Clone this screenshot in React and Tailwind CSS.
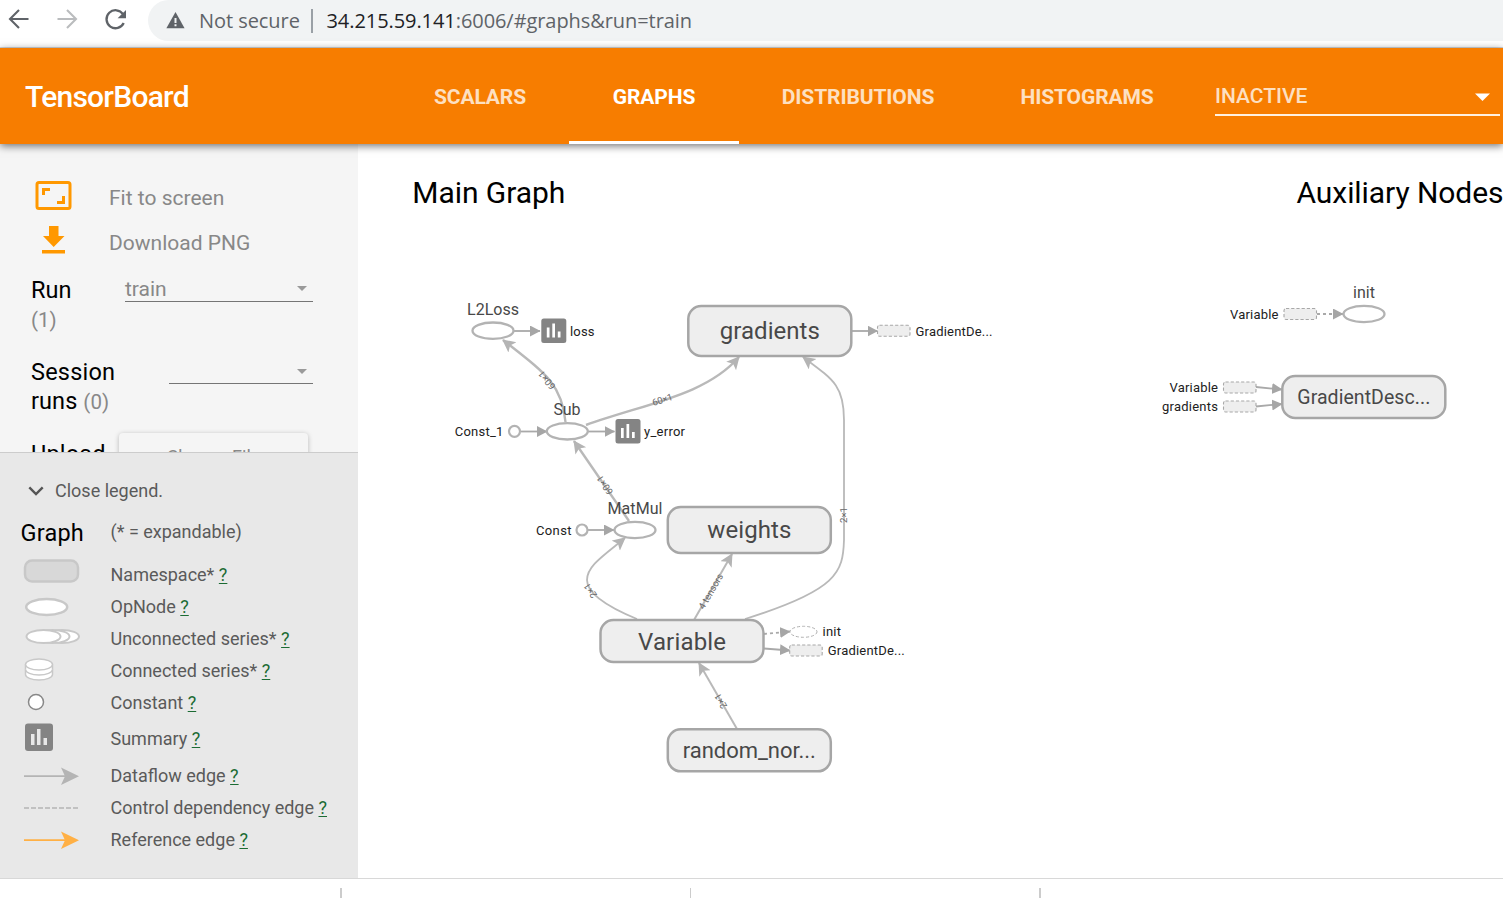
import React from "react";

const TABS = [
  { label: "SCALARS", box: "w-[178px]" },
  { label: "GRAPHS", active: true, box: "w-[170px]" },
  { label: "DISTRIBUTIONS", box: "w-[238px]" },
  { label: "HISTOGRAMS", box: "w-[220px]" },
];

function BrowserBar() {
  return (
    <div className="flex h-[48px] shrink-0 items-start border-b border-[#d5d8dc] bg-white">
      <svg className="h-[40px] w-[148px] shrink-0" viewBox="0 0 148 40" fill="none">
        <path d="M28.500 19H11M19 10L10 19l9 9" stroke="#5f6368" strokeWidth="2.100" />
        <path d="M57.500 19H75M67 10l9 9l-9 9" stroke="#babcbe" strokeWidth="2.100" />
        <path d="M123 14.200A9 9 0 1 0 123.700 23" stroke="#5f6368" strokeWidth="2.300" />
        <path d="M126 10v8.200h-8.400z" fill="#5f6368" />
      </svg>
      <div className="flex h-[41px] min-w-0 flex-1 items-center rounded-l-full bg-[#f1f3f4] pl-[18px] font-['Open_Sans','Noto_Sans',sans-serif] text-[20px] leading-[40px]">
        <svg className="-mt-[2px] h-[18px] w-[19px] shrink-0" viewBox="0 0 19 18">
          <path d="M9.500 1L18.600 17.200H.4z" fill="#5f6368" />
          <path d="M8.500 7h2v5h-2zM8.500 13.300h2v2h-2z" fill="#f1f3f4" />
        </svg>
        <span className="ml-[14px] w-[99px] whitespace-nowrap tracking-[-0.06px] text-[#5f6368]">Not secure</span>
        <span className="ml-[13px] h-[24px] w-[2px] bg-[#9aa0a6]" />
        <span className="ml-[13.5px] whitespace-nowrap tracking-[-0.07px] text-[#5f6368]">
          <span className="text-[#202124]">34.215.59.141</span>:6006/#graphs&amp;run=train
        </span>
      </div>
    </div>
  );
}

function Header() {
  return (
    <header className="relative z-10 flex h-[96px] shrink-0 bg-[#f77d00] shadow-[0_2px_8px_rgba(0,0,0,0.55)]">
      <div className="flex w-[391px] shrink-0 items-center pl-[25px] text-[30px] font-medium tracking-[-0.75px] text-white">
        TensorBoard
      </div>
      <nav className="flex shrink-0 text-[21px] font-bold tracking-[-0.12px]">
        {TABS.map((t) => (
          <div
            key={t.label}
            className={`flex items-center justify-center border-b-[3px] pt-[7px] ${t.box} ${
              t.active ? "border-white text-white" : "border-transparent text-[#fde0c2]"
            }`}
          >
            {t.label}
          </div>
        ))}
      </nav>
      <div className="ml-[18px] mt-[32px] flex h-[36px] w-[285px] items-center justify-between border-b-2 border-[#fff0e0] pr-[10px] text-[21px] font-medium text-[#fde0c2]">
        <span>INACTIVE</span>
        <svg className="h-[8px] w-[15px]" viewBox="0 0 15 8">
          <path d="M0 .5h15L7.500 8z" fill="#fff" />
        </svg>
      </div>
    </header>
  );
}

function Caret() {
  return (
    <svg className="h-[5px] w-[10px]" viewBox="0 0 10 5">
      <path d="M0 0h10L5 5z" fill="#9a9a9a" />
    </svg>
  );
}

function Controls() {
  return (
    <div className="h-[308px] shrink-0 overflow-hidden bg-[#f5f5f5] text-[21px] text-[#888]">
      <div className="mt-[31px] flex h-[45px] items-center pl-[35px]">
        <svg className="-mt-[4px] h-[31px] w-[37px]" viewBox="0 0 37 31" fill="none" stroke="#ff9800">
          <rect x="2" y="2.500" width="33" height="26" rx="2" strokeWidth="3" />
          <path d="M8.500 15V9.500H15M22 22.500h6.500V16" strokeWidth="3" />
        </svg>
        <span className="ml-[37px] pt-[2px]">Fit to screen</span>
      </div>
      <div className="flex h-[45px] items-center pl-[35px]">
        <svg className="-mt-[6px] h-[31px] w-[37px]" viewBox="0 0 37 31" fill="#ff9800">
          <path d="M14 2h9.500v10h6L18.700 23L8 12h6zM7 26h23v3.500H7z" />
        </svg>
        <span className="ml-[37px] pt-[2px]">Download PNG</span>
      </div>
      <div className="flex h-[82px] items-start pl-[31px] pt-[10px]">
        <div className="w-[94px] leading-[31px]">
          <div className="h-[32px] text-[23.5px] text-black">Run</div>
          <div className="h-[30px] text-[20.5px] leading-[27px]">(1)</div>
        </div>
        <div className="mt-[1px] flex h-[26px] w-[188px] items-center justify-between border-b border-[#757575] pr-[6px]">
          <span className="pt-[2px]">train</span>
          <Caret />
        </div>
      </div>
      <div className="flex h-[77px] items-start pl-[31px] pt-[11px]">
        <div className="w-[138px] text-[23.5px] leading-[29px] text-black">
          <div className="tracking-[0.2px]">Session</div>
          <div className="tracking-[0.1px]">
            runs <span className="text-[20.5px] text-[#888]">(0)</span>
          </div>
        </div>
        <div className="mt-[1px] flex h-[25px] w-[144px] items-center justify-end border-b border-[#757575] pr-[6px]">
          <Caret />
        </div>
      </div>
      <div className="flex items-start pl-[31px]">
        <div className="w-[88px] pt-[16px] text-[23.5px] leading-[29px] tracking-[0.2px] text-black">Upload</div>
        <div className="mt-[9px] h-[48px] w-[189px] rounded-[4px] bg-[#f5f5f5] pt-[10px] text-center text-[18px] leading-[28px] shadow-[0_1px_5px_rgba(0,0,0,0.25)]">
          Choose File
        </div>
      </div>
    </div>
  );
}

const C = "#c8c8c8";
const LEGEND = [
  { label: "Namespace*", h: "h-[32px]", icon: <rect x="25" y="1.500" width="53" height="21" rx="7" fill="#d8d8d8" stroke={C} strokeWidth="2.500" /> },
  { label: "OpNode", h: "h-[32px]", icon: <ellipse cx="46.700" cy="16" rx="20.500" ry="8" fill="#fff" stroke={C} strokeWidth="2.500" /> },
  {
    label: "Unconnected series*",
    h: "h-[32px]",
    icon: [62, 52.5, 43.5].map((x) => <ellipse key={x} cx={x} cy="13.500" rx="17" ry="6.500" fill="#fff" stroke={C} strokeWidth="2" />),
  },
  {
    label: "Connected series*",
    h: "h-[32px]",
    icon: (
      <g fill="#fff" stroke={C} strokeWidth="1.500">
        <path d="M25.500 9.500V19.500A13.500 5.500 0 0 0 52.500 19.500V9.500" />
        <path d="M25.500 14.500A13.500 5.500 0 0 0 52.500 14.500" />
        <ellipse cx="39" cy="9.500" rx="13.500" ry="5.500" />
      </g>
    ),
  },
  { label: "Constant", h: "h-[32px]", icon: <circle cx="36" cy="15" r="7.500" fill="#fff" stroke="#888" strokeWidth="1.500" /> },
  {
    label: "Summary",
    h: "h-[41px]",
    icon: (
      <g>
        <rect x="25" y="4.500" width="28" height="27.500" rx="3" fill="#848484" />
        <path d="M31 15h3.500v11H31zM37 10h3.500v16H37zM43.500 19H47v7h-3.500z" fill="#e8e8e8" />
      </g>
    ),
  },
  {
    label: "Dataflow edge",
    h: "h-[32px]",
    icon: (
      <g fill="#b4b4b4">
        <path d="M24 15.300h42v1.700H24z" />
        <path d="M61 7.500L79 16.200L61 25l4-8.800z" />
      </g>
    ),
  },
  { label: "Control dependency edge", h: "h-[32px]", icon: <path d="M24 16h54" stroke="#b4b4b4" strokeWidth="1.500" strokeDasharray="5 2" /> },
  {
    label: "Reference edge",
    h: "h-[32px]",
    icon: (
      <g fill="#ffb045">
        <path d="M24 15.300h42v1.700H24z" />
        <path d="M61 7.500L79 16.200L61 25l4-8.800z" />
      </g>
    ),
  },
];

function Legend() {
  return (
    <div className="flex-1 border-t border-[#ccc] bg-[#e8e8e8] text-[18px] text-[#5a5a5a]">
      <div className="flex h-[60px] items-end pb-[9px] pl-[28px]">
        <svg className="mb-[8px] h-[10px] w-[16px]" viewBox="0 0 16 10" fill="none">
          <path d="M1.300 1.300L8 8l6.700-6.700" stroke="#555" strokeWidth="2.400" />
        </svg>
        <span className="ml-[11px] leading-[27px]">Close legend.</span>
      </div>
      <div className="flex h-[46px] items-start pl-[20.5px]">
        <span className="w-[90px] text-[23.5px] leading-[41px] tracking-[0.2px] text-black">Graph</span>
        <span className="leading-[37px]">(* = expandable)</span>
      </div>
      {LEGEND.map((r) => (
        <div key={r.label} className={`flex items-center ${r.h}`}>
          <svg className="h-full w-[110.5px] shrink-0 overflow-visible">{r.icon}</svg>
          <span className="whitespace-nowrap pb-[2px]">
            {r.label} <span className="text-[#1b6b33] underline underline-offset-2">?</span>
          </span>
        </div>
      ))}
    </div>
  );
}

function Label({ x, y, size, w, fill = "#484848", anchor = "middle", children }) {
  return (
    <text x={x} y={y} fontSize={size} fill={fill} textAnchor={anchor} textLength={w}>
      {children}
    </text>
  );
}

function Namespace({ x, y, w = 163, h, label, size, tw, ty }) {
  return (
    <g>
      <rect x={x} y={y} width={w} height={h} rx="13" fill="#eee" stroke="#a6a6a6" strokeWidth="2.500" />
      <Label x={x + w / 2} y={ty} size={size} w={tw}>{label}</Label>
    </g>
  );
}

function Op({ x, y }) {
  return <ellipse cx={x} cy={y} rx="20.500" ry="8.200" fill="#fff" stroke="#b3b3b3" strokeWidth="2.300" />;
}

function Summary({ x, y }) {
  return (
    <g>
      <rect x={x} y={y} width="25" height="24.500" rx="2.500" fill="#848484" />
      <path d={`M${x + 5.5} ${y + 9}h2.700v10h-2.700zM${x + 11} ${y + 5}h2.700v14H${x + 11}zM${x + 16.5} ${y + 13}h2.700v6h-2.700z`} fill="#fff" />
    </g>
  );
}

function Ghost({ x, y }) {
  return <rect x={x} y={y} width="32.500" height="11" rx="2" fill="#eee" stroke="#a8a8a8" strokeWidth="1.100" strokeDasharray="3.200 2" />;
}

function EdgeLabel({ x, y, angle, children }) {
  return (
    <text transform={`translate(${x} ${y}) rotate(${angle})`} y="3" fontSize="9.500" fill="#666" textAnchor="middle">
      {children}
    </text>
  );
}

function Graph() {
  return (
    <svg className="h-[734px] min-w-0 flex-1 bg-white" viewBox="358 144 1145 734" fontFamily="Roboto, sans-serif">
      <defs>
        <marker id="flow" markerUnits="userSpaceOnUse" markerWidth="14" markerHeight="14" refX="12" refY="6.500" orient="auto">
          <path d="M0 0L13 6.500L0 13l3-6.500z" fill="#b4b4b4" />
        </marker>
        <marker id="tri" markerUnits="userSpaceOnUse" markerWidth="12" markerHeight="12" refX="10" refY="5.500" orient="auto">
          <path d="M0 0L10.500 5.500L0 11z" fill="#a6a6a6" />
        </marker>
      </defs>
      <Label x="412.300" y="203" size="30" w="153" fill="#000" anchor="start">Main Graph</Label>
      <Label x="1296.500" y="203" size="30" w="207" fill="#000" anchor="start">Auxiliary Nodes</Label>

      <g fill="none" stroke="#b9b9b9" strokeWidth="2.400">
        <path d="M565.500 422C562 384 545 373 503 340" markerEnd="url(#flow)" />
        <path d="M586 425C648 403 706 395 739 357" markerEnd="url(#flow)" />
        <path d="M629 521L574 441" markerEnd="url(#flow)" />
        <path d="M694 620L732 554" strokeWidth="2" markerEnd="url(#flow)" />
        <path d="M737 729L699 663" strokeWidth="2" markerEnd="url(#flow)" />
        <path d="M637 619C603 605 587 592 587 580C587 566 603 556 625 538" strokeWidth="1.800" markerEnd="url(#flow)" />
        <path d="M745 619C838 590 843 572 844 540V420C844 386 834 380 803 357" strokeWidth="1.800" markerEnd="url(#flow)" />
      </g>
      <g fill="none" stroke="#a9a9a9" strokeWidth="1.800">
        <path d="M513 331H540" markerEnd="url(#tri)" />
        <path d="M588 431.500H614.500" markerEnd="url(#tri)" />
        <path d="M521 431.500H547" markerEnd="url(#tri)" />
        <path d="M588 530H614" markerEnd="url(#tri)" />
        <path d="M852 331H877.500" markerEnd="url(#tri)" />
        <path d="M764 634L790 631.500" strokeDasharray="3 3" markerEnd="url(#tri)" />
        <path d="M764 648.500L790 650.500" markerEnd="url(#tri)" />
        <path d="M1317 314H1343" strokeDasharray="3 3" markerEnd="url(#tri)" />
        <path d="M1256 387L1282 389.500" markerEnd="url(#tri)" />
        <path d="M1256 406.500L1282 404" markerEnd="url(#tri)" />
      </g>

      <EdgeLabel x="547" y="380" angle="231">60×1</EdgeLabel>
      <EdgeLabel x="662.500" y="400" angle="-18">60×1</EdgeLabel>
      <EdgeLabel x="605" y="485" angle="236">60×1</EdgeLabel>
      <EdgeLabel x="590.500" y="590.500" angle="236">2×1</EdgeLabel>
      <EdgeLabel x="711" y="591.500" angle="-60">4 tensors</EdgeLabel>
      <EdgeLabel x="844" y="515" angle="-90">2×1</EdgeLabel>
      <EdgeLabel x="721" y="701" angle="240">2×1</EdgeLabel>

      <Namespace x={688.3} y={306} h={50} label="gradients" size="24" tw="100" ty="339" />
      <Namespace x={667.8} y={507} h={46} label="weights" size="24" tw="84" ty="538" />
      <Namespace x={600.5} y={620} h={42} label="Variable" size="24" tw="88" ty="650" />
      <Namespace x={667.8} y={729.3} h={42} label="random_nor..." size="22" tw="133" ty="758" />
      <Namespace x={1282.3} y={376} h={42} label="GradientDesc..." size="19.500" tw="133" ty="404" />

      <Op x={493} y={330.7} />
      <Op x={567.3} y={431.3} />
      <Op x={635} y={530} />
      <Op x={1364} y={314} />
      <circle cx="514.500" cy="431.300" r="5.500" fill="#fff" stroke="#b3b3b3" strokeWidth="2.200" />
      <circle cx="582" cy="530" r="5.500" fill="#fff" stroke="#b3b3b3" strokeWidth="2.200" />
      <Summary x={541.3} y={318.6} />
      <Summary x={615.5} y={419} />
      <Ghost x={877.5} y={325.3} />
      <Ghost x={789.7} y={645} />
      <Ghost x={1284} y={308.5} />
      <Ghost x={1223.5} y={382} />
      <Ghost x={1223.5} y={401} />
      <ellipse cx="803.500" cy="631.800" rx="13.500" ry="5.500" fill="#fff" stroke="#b0b0b0" strokeDasharray="3 2" />

      <Label x="493" y="315" size="16" w="52">L2Loss</Label>
      <Label x="567" y="415" size="16" w="27">Sub</Label>
      <Label x="635" y="514" size="16" w="55">MatMul</Label>
      <Label x="1364" y="298" size="16" w="22">init</Label>
      <Label x="570" y="336" size="13" w="24.500" fill="#212121" anchor="start">loss</Label>
      <Label x="644" y="436" size="13" w="41" fill="#212121" anchor="start">y_error</Label>
      <Label x="454.800" y="436" size="13" w="48.500" fill="#212121" anchor="start">Const_1</Label>
      <Label x="536" y="535" size="13" w="35.500" fill="#212121" anchor="start">Const</Label>
      <Label x="915.500" y="336" size="13" w="77" fill="#212121" anchor="start">GradientDe...</Label>
      <Label x="822.500" y="636" size="13" w="18.500" fill="#212121" anchor="start">init</Label>
      <Label x="827.800" y="655" size="13" w="77" fill="#212121" anchor="start">GradientDe...</Label>
      <Label x="1230" y="319" size="13" w="48.500" fill="#212121" anchor="start">Variable</Label>
      <Label x="1169.500" y="392" size="13" w="48.500" fill="#212121" anchor="start">Variable</Label>
      <Label x="1162" y="411" size="13" w="56" fill="#212121" anchor="start">gradients</Label>
    </svg>
  );
}

export default function App() {
  return (
    <div className="flex h-[898px] w-[1503px] flex-col overflow-hidden bg-white font-[Roboto,sans-serif]">
      <BrowserBar />
      <Header />
      <main className="flex h-[734px] shrink-0">
        <aside className="flex w-[358px] shrink-0 flex-col">
          <Controls />
          <Legend />
        </aside>
        <Graph />
      </main>
      <footer className="flex h-[20px] shrink-0 items-end border-t border-[#d8d8d8] bg-white pl-[340px]">
        <span className="h-[10px] w-[2px] bg-[#ccc]" />
        <span className="ml-[348px] h-[10px] w-px bg-[#ccc]" />
        <span className="ml-[348px] h-[10px] w-[2px] bg-[#ccc]" />
      </footer>
    </div>
  );
}
